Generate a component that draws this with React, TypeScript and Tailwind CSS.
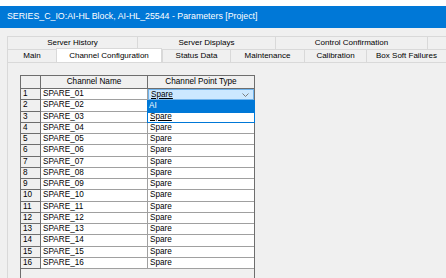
import React from 'react';

const rows = Array.from({ length: 16 }, (_, i) => ({
  id: i + 1,
  name: `SPARE_${String(i + 1).padStart(2, '0')}`,
  type: 'Spare',
}));

const topTabs = [
  { label: 'Server History', w: 'w-[130px]' },
  { label: 'Server Displays', w: 'w-[138px]' },
  { label: 'Control Confirmation', w: 'w-[152px]' },
  { label: '', w: 'flex-1' },
];

const bottomTabs = [
  { label: 'Main', w: 'w-[49px]', active: false },
  { label: 'Channel Configuration', w: 'w-[106px]', active: true },
  { label: 'Status Data', w: 'w-[68px]', active: false },
  { label: 'Maintenance', w: 'w-[74px]', active: false },
  { label: 'Calibration', w: 'w-[62px]', active: false },
  { label: 'Box Soft Failures', w: 'flex-1', active: false },
];

export default function App() {
  return (
    <div className="w-[446px] h-[278px] overflow-hidden bg-[#f0f0f0] font-['Liberation_Sans',Arial,sans-serif] text-black">
      {/* Title bar */}
      <div className="h-[6px] bg-white" />
      <div className="h-[22px] bg-[#0078d7] text-white text-[8.8px] pl-[7px] flex items-center whitespace-nowrap">
        SERIES_C_IO:AI-HL Block, AI-HL_25544 - Parameters [Project]
      </div>

      {/* Tabs */}
      <div className="pl-[7px] pt-[8px] text-[8px]">
        <div className="flex h-[13px]">
          {topTabs.map((t, i) => (
            <div
              key={i}
              className={`${t.w} shrink-0 border-t border-l border-[#d9d9d9] flex items-center justify-center whitespace-nowrap`}
            >
              {t.label}
            </div>
          ))}
        </div>
        <div className="flex h-[13px]">
          {bottomTabs.map((t, i) => (
            <div
              key={i}
              className={`${t.w} shrink-0 border-t border-l border-[#d9d9d9] flex items-center justify-center whitespace-nowrap ${
                t.active ? 'bg-white -mt-px h-[14px] border-r' : ''
              }`}
            >
              {t.label}
            </div>
          ))}
        </div>
      </div>

      {/* Page */}
      <div className="ml-[7px] h-[220px] border-l border-t border-[#d9d9d9] pl-[12px] pt-[12px]">
        <div className="relative w-[235px] h-[220px] border border-[#6e6e6e] bg-[#f0f0f0] text-[8.2px] leading-none">
          {/* header */}
          <div className="flex h-[13px]">
            <div className="w-[20px] border-r border-b border-[#6e6e6e]" />
            <div className="w-[107px] border-r border-b border-[#6e6e6e] flex items-center justify-center">
              Channel Name
            </div>
            <div className="flex-1 border-b border-[#6e6e6e] flex items-center justify-center">
              Channel Point Type
            </div>
          </div>

          {rows.map((r) => (
            <div key={r.id} className="flex h-[11.25px]">
              <div className="w-[20px] border-r border-b border-[#6e6e6e] bg-[#f0f0f0] flex items-center pl-[2px]">
                {r.id}
              </div>
              <div className="w-[107px] border-r border-b border-[#a0a0a0] bg-white flex items-center pl-[2px]">
                {r.name}
              </div>
              {r.id === 1 ? (
                <div className="flex-1 border border-[#6fb3ec] bg-[#cce8ff] flex items-center pl-[2px] pr-[4px] justify-between">
                  <span className="underline">Spare</span>
                  <svg width="7" height="4" viewBox="0 0 7 4" className="text-[#707070]">
                    <path d="M0.5 0.5 L3.5 3.5 L6.5 0.5" fill="none" stroke="currentColor" strokeWidth="0.9" />
                  </svg>
                </div>
              ) : (
                <div className="flex-1 border-b border-[#a0a0a0] bg-white flex items-center pl-[2px]">
                  {/* rows 2 and 3 sit under the open list */}
                  {r.id > 3 ? r.type : ''}
                </div>
              )}
            </div>
          ))}

          {/* open dropdown list */}
          <div className="absolute left-[126px] top-[24.25px] w-[108px] bg-white">
            <div className="h-[11.25px] bg-[#0078d7] text-white flex items-center pl-[2px]">AI</div>
            <div className="h-[11.25px] border border-[#0078d7] flex items-center pl-[2px]">
              <span className="underline">Spare</span>
            </div>
          </div>
        </div>
      </div>
    </div>
  );
}
